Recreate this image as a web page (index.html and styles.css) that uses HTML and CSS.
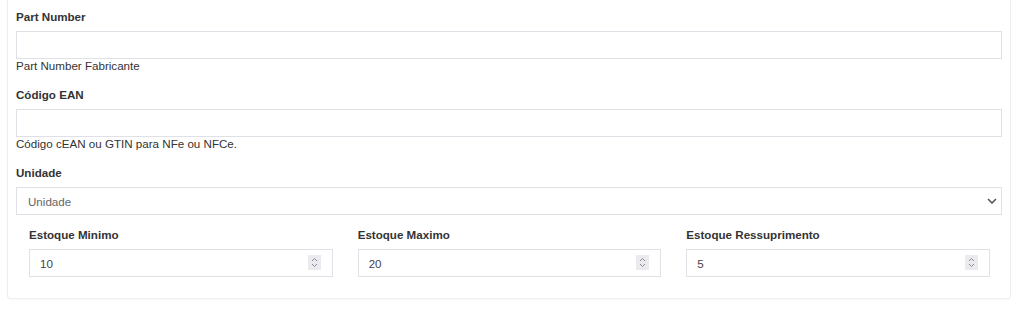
FILE: index.html
```html
<!DOCTYPE html>
<html lang="pt-BR">
<head>
  <meta charset="UTF-8" />
  <meta name="viewport" content="width=device-width, initial-scale=1.0"/>
  <title>Produto - Estoque</title>
  <link rel="stylesheet" href="styles.css">
</head>
<body>
  <div class="page">
    <div class="card">
      <div class="form-group">
        <label class="form-label" for="partNumber">Part Number</label>
        <input class="form-control" type="text" id="partNumber" />
        <small class="form-help">Part Number Fabricante</small>
      </div>
      <div class="form-group">
        <label class="form-label" for="ean">Código EAN</label>
        <input class="form-control" type="text" id="ean" />
        <small class="form-help">Código cEAN ou GTIN para NFe ou NFCe.</small>
      </div>
      <div class="form-group">
        <label class="form-label" for="unidade">Unidade</label>
        <div class="select-wrap">
          <select class="form-control form-select" id="unidade">
            <option>Unidade</option>
          </select>
          <svg class="select-arrow" width="10" height="6" viewBox="0 0 10 6">
            <path d="M1 1l4 4 4-4" fill="none" stroke="#555" stroke-width="1.6"/>
          </svg>
        </div>
      </div>
      <div class="stock-row">
        <div class="stock-col">
          <label class="form-label" for="estoqueMin">Estoque Minimo</label>
          <div class="number-wrap">
            <input class="form-control" type="number" id="estoqueMin" value="10" />
            <svg class="spin" width="13" height="15" viewBox="0 0 13 15">
              <rect width="13" height="15" fill="#ebebef"/>
              <path d="M4 6l2.5-2.5L9 6M4 9l2.5 2.5L9 9" fill="none" stroke="#8a8a90" stroke-width="1"/>
            </svg>
          </div>
        </div>
        <div class="stock-col">
          <label class="form-label" for="estoqueMax">Estoque Maximo</label>
          <div class="number-wrap">
            <input class="form-control" type="number" id="estoqueMax" value="20" />
            <svg class="spin" width="13" height="15" viewBox="0 0 13 15">
              <rect width="13" height="15" fill="#ebebef"/>
              <path d="M4 6l2.5-2.5L9 6M4 9l2.5 2.5L9 9" fill="none" stroke="#8a8a90" stroke-width="1"/>
            </svg>
          </div>
        </div>
        <div class="stock-col">
          <label class="form-label" for="estoqueRes">Estoque Ressuprimento</label>
          <div class="number-wrap">
            <input class="form-control" type="number" id="estoqueRes" value="5" />
            <svg class="spin" width="13" height="15" viewBox="0 0 13 15">
              <rect width="13" height="15" fill="#ebebef"/>
              <path d="M4 6l2.5-2.5L9 6M4 9l2.5 2.5L9 9" fill="none" stroke="#8a8a90" stroke-width="1"/>
            </svg>
          </div>
        </div>
      </div>
    </div>
  </div>
</body>
</html>
```

FILE: styles.css
```css
body {
  font-family: 'Liberation Sans', Arial, sans-serif;
  font-size: 11.6px;
  color: #333;
  background-color: #fff;
  margin: 0;
}
.page {
  padding: 0 13px 15px 7px;
}
.card {
  background-color: #fff;
  border: 1px solid #eeeef0;
  border-top: none;
  border-radius: 0 0 4px 4px;
  box-shadow: 0 1px 2px rgba(0, 0, 0, 0.03);
  padding: 10px 8px 21px 8px;
}
.form-group {
  margin-bottom: 15px;
}
.form-group:nth-child(3) {
  margin-bottom: 13px;
}
.form-label {
  display: block;
  font-weight: bold;
  line-height: 14px;
  margin-bottom: 7px;
  color: #333;
}
.form-help {
  display: block;
  font-size: 11.6px;
  line-height: 14px;
  color: #333;
}
.form-control {
  display: block;
  width: 100%;
  height: 28px;
  box-sizing: border-box;
  border: 1px solid #e0e0e7;
  border-radius: 0;
  background-color: #fff;
  padding: 0 10px;
  font-family: inherit;
  font-size: 11.6px;
  color: #555;
  outline: none;
  margin: 0;
}
.select-wrap,
.number-wrap {
  position: relative;
}
.form-select {
  appearance: none;
  -webkit-appearance: none;
  color: #666;
  padding-left: 11px;
}
.select-arrow {
  position: absolute;
  right: 5px;
  top: 11px;
  pointer-events: none;
}
.number-wrap input::-webkit-inner-spin-button,
.number-wrap input::-webkit-outer-spin-button {
  -webkit-appearance: none;
  margin: 0;
}
.spin {
  position: absolute;
  right: 12px;
  top: 6px;
  pointer-events: none;
}
.stock-row {
  display: grid;
  grid-template-columns: repeat(3, 1fr);
  gap: 25px;
  padding: 0 12px 0 13px;
}
.stock-col .form-control {
  color: #444;
}
```
